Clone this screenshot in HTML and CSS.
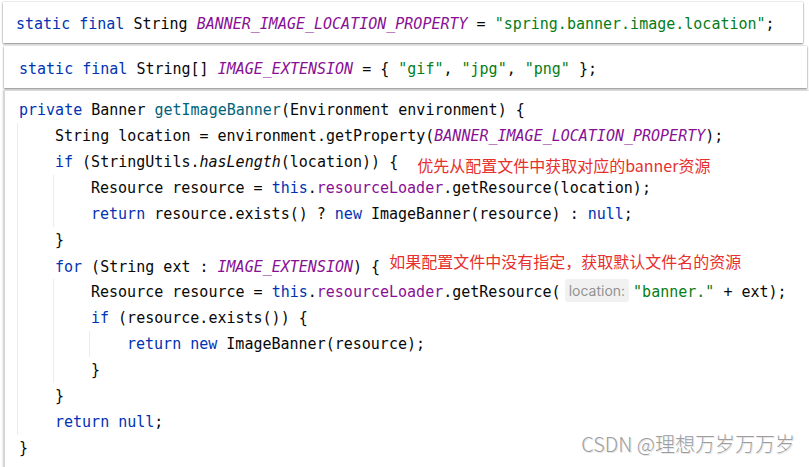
FILE: index.html
```html
<html>
<head>
    <title>getImageBanner</title>
    <link rel="stylesheet" href="styles.css">
</head>
<body>
    <div class="snip snip-a"><span class="kw">static final</span> String <span class="cst">BANNER_IMAGE_LOCATION_PROPERTY</span> = <span class="str">"spring.banner.image.location"</span>;</div>

    <div class="snip snip-b"><span class="kw">static final</span> String[] <span class="cst">IMAGE_EXTENSION</span> = { <span class="str">"gif"</span>, <span class="str">"jpg"</span>, <span class="str">"png"</span> };</div>

    <div class="snip snip-c">
        <div class="line"><span class="kw">private</span> Banner <span class="fn">getImageBanner</span>(Environment environment) {</div>
        <div class="block">
            <div class="line">String location = environment.getProperty(<span class="cst">BANNER_IMAGE_LOCATION_PROPERTY</span>);</div>
            <div class="line"><span class="kw">if</span> (StringUtils.<span class="it">hasLength</span>(location)) {<span class="note note-a">优先从配置文件中获取对应的banner资源</span></div>
            <div class="block">
                <div class="line">Resource resource = <span class="kw">this</span>.<span class="fld">resourceLoader</span>.getResource(location);</div>
                <div class="line"><span class="kw">return</span> resource.exists() ? <span class="kw">new</span> ImageBanner(resource) : <span class="kw">null</span>;</div>
            </div>
            <div class="line">}</div>
            <div class="line"><span class="kw">for</span> (String ext : <span class="cst">IMAGE_EXTENSION</span>) {<span class="note note-b">如果配置文件中没有指定，获取默认文件名的资源</span></div>
            <div class="block">
                <div class="line">Resource resource = <span class="kw">this</span>.<span class="fld">resourceLoader</span>.getResource(<span class="hint">location:</span><span class="str">"banner."</span> + ext);</div>
                <div class="line"><span class="kw">if</span> (resource.exists()) {</div>
                <div class="block">
                    <div class="line"><span class="kw">return new</span> ImageBanner(resource);</div>
                </div>
                <div class="line">}</div>
            </div>
            <div class="line">}</div>
            <div class="line"><span class="kw">return null</span>;</div>
        </div>
        <div class="line">}</div>
    </div>

    <div class="watermark">CSDN @理想万岁万万岁</div>
</body>
</html>
```

FILE: styles.css
```css
html, body {
    margin: 0;
    height: 100%;
    overflow: hidden;
}

body {
    position: relative;
    background: #ffffff;
    color: #080808;
    font-family: "DejaVu Sans Mono", "Liberation Mono", monospace;
    font-size: 15px;
}

.snip {
    background: #ffffff;
}

.snip-a {
    margin: 2px 6px 0 3px;
    height: 38px;
    line-height: 38px;
    padding: 3px 0 0 13px;
    white-space: pre;
    box-shadow: 0 1px 2px rgba(0, 0, 0, 0.45), 0 0 1px rgba(0, 0, 0, 0.3);
}

.snip-b {
    margin: 3px 2px 0 4px;
    height: 38px;
    line-height: 38px;
    padding: 4px 0 0 15px;
    white-space: pre;
    box-shadow: 0 1px 2px rgba(0, 0, 0, 0.45), 0 0 1px rgba(0, 0, 0, 0.3);
}

.snip-c {
    margin: 3px 0 0 3px;
    height: 400px;
    padding: 6px 0 0 14px;
    border-left: 2px solid #d6d6d6;
    box-shadow: 0 -1px 2px rgba(0, 0, 0, 0.18);
}

.line {
    height: 26px;
    line-height: 26px;
    white-space: pre;
}

.block {
    margin-left: -2px;
    padding-left: 37px;
    border-left: 1px solid #ececec;
}

.kw { color: #0033b3; }
.cst { color: #871094; font-style: italic; }
.str { color: #067d17; }
.fn { color: #00627a; }
.fld { color: #871094; }
.it { font-style: italic; }

.hint {
    display: inline-block;
    margin: 0 4px;
    padding: 0 4px;
    height: 23px;
    line-height: 23px;
    vertical-align: 1px;
    border-radius: 3px;
    background: #f1f1f1;
    color: #939393;
    font-family: Inter, "Noto Sans", sans-serif;
    font-size: 14px;
}

.note {
    color: #e6302e;
    font-family: "Noto Sans CJK SC", sans-serif;
    font-size: 16px;
    line-height: 16px;
}

.note-a {
    margin-left: 19px;
    vertical-align: -5px;
}

.note-b {
    margin-left: 9px;
    vertical-align: 4px;
}

.watermark {
    position: absolute;
    right: 14px;
    bottom: 9px;
    color: #9d9d9d;
    font-family: "Noto Sans CJK SC", sans-serif;
    font-size: 20px;
    font-weight: 300;
    text-shadow: 0 0 1px #ffffff, 1px 1px 0 #e4e4e4;
    white-space: pre;
}
```
